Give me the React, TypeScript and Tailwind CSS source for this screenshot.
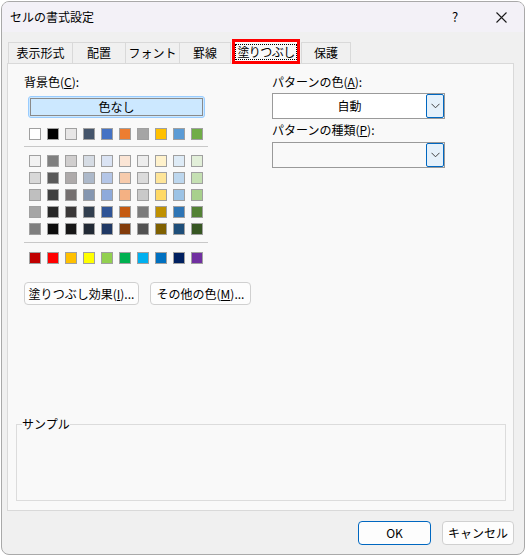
import React from 'react';

const font = { fontFamily: '"Noto Sans CJK JP", "Noto Sans", sans-serif' };

const themeRow = ['#ffffff', '#000000', '#e7e6e6', '#44546a', '#4472c4', '#ed7d31', '#a5a5a5', '#ffc000', '#5b9bd5', '#70ad47'];

const tintRows = [
  ['#f2f2f2', '#7f7f7f', '#d0cece', '#d6dce4', '#dae3f3', '#fbe5d5', '#ededed', '#fff2cc', '#deebf6', '#e2efd9'],
  ['#d8d8d8', '#595959', '#aeaaaa', '#adb9ca', '#b4c6e7', '#f7cbac', '#dbdbdb', '#fee599', '#bdd7ee', '#c5e0b3'],
  ['#bfbfbf', '#3f3f3f', '#757070', '#8496b0', '#8eaadb', '#f4b183', '#c9c9c9', '#ffd965', '#9cc3e5', '#a8d08d'],
  ['#a5a5a5', '#262626', '#3a3838', '#323f4f', '#2f5496', '#c55a11', '#7b7b7b', '#bf9000', '#2e75b5', '#538135'],
  ['#7f7f7f', '#0c0c0c', '#171616', '#222a35', '#1f3864', '#833c0b', '#525252', '#7f6000', '#1e4e79', '#375623'],
];

const standardRow = ['#c00000', '#ff0000', '#ffc000', '#ffff00', '#92d050', '#00b050', '#00b0f0', '#0070c0', '#002060', '#7030a0'];

function SwatchRow({ colors }: { colors: string[] }) {
  return (
    <div className="flex gap-[6px] ml-[5px]">
      {colors.map((c, i) => (
        <div key={i} className="size-[12px] border border-[#a0a0a0]" style={{ backgroundColor: c }} />
      ))}
    </div>
  );
}

function Chevron() {
  return (
    <svg width="9" height="6" viewBox="0 0 9 6" fill="none">
      <path d="M0.5 0.8 L4.5 4.8 L8.5 0.8" stroke="#404040" strokeWidth="1" />
    </svg>
  );
}

function Select({ value, white }: { value?: string; white?: boolean }) {
  return (
    <div className={`flex h-[26px] w-[173px] border border-[#9a9a9a] ${white ? 'bg-white' : 'bg-[#f9f9f9]'}`}>
      <div className="flex-1 flex items-center justify-center">{value}</div>
      <div className="w-[18px] h-full border border-[#0067c0] rounded-[2px] bg-[#e5f1fb] flex items-center justify-center">
        <Chevron />
      </div>
    </div>
  );
}

const tabs = [
  { label: '表示形式', w: 'w-[65px]' },
  { label: '配置', w: 'w-[54px]' },
  { label: 'フォント', w: 'w-[55px]' },
  { label: '罫線', w: 'w-[52px]' },
];

export default function App() {
  return (
    <div className="w-[527px] h-[556px] bg-white pl-[1px] pt-[1px] text-[12px] leading-[16px] text-black" style={font}>
      <div className="w-[524px] h-[554px] border border-[#a9a9a9] rounded-lg overflow-hidden flex flex-col bg-[#f0f0f0]">
        {/* Title bar */}
        <div className="h-[30px] bg-[#f3f1f7] flex items-center pl-[8px]">
          <span className="text-[12px]">セルの書式設定</span>
          <div className="ml-auto flex h-full">
            <div className="w-[46px] flex items-center justify-center text-[13px]">?</div>
            <div className="w-[46px] flex items-center justify-center">
              <svg width="11" height="11" viewBox="0 0 11 11">
                <path d="M0.5 0.5 L10.5 10.5 M10.5 0.5 L0.5 10.5" stroke="#1a1a1a" strokeWidth="1.1" />
              </svg>
            </div>
          </div>
        </div>

        {/* Tabs */}
        <div className="flex items-end h-[24px] mt-[7px] ml-[6px] relative z-10">
          {tabs.map((t, i) => (
            <div
              key={t.label}
              className={`${t.w} h-[21px] border-t border-l border-r border-[#d9d9d9] bg-[#f0f0f0] flex items-center justify-center ${i > 0 ? '-ml-px' : ''}`}
            >
              {t.label}
            </div>
          ))}
          <div className="w-[68px] h-[25px] -mb-px ml-px border-[3px] border-[#ff0000] bg-[#f9f9f9] flex items-center justify-center">
            <span className="border border-dotted border-black px-px leading-[14px] whitespace-nowrap tracking-[-0.6px]">塗りつぶし</span>
          </div>
          <div className="w-[50px] h-[21px] ml-px border-t border-l border-r border-[#d9d9d9] bg-[#f0f0f0] flex items-center justify-center">
            保護
          </div>
        </div>

        {/* Panel */}
        <div className="ml-[5px] w-[507px] h-[448px] border border-[#d9d9d9] bg-[#f9f9f9] flex flex-col pl-[16px] pt-[10px]">
          <div className="flex">
            {/* Left column */}
            <div className="w-[248px] flex flex-col">
              <div>
                背景色(<span className="underline">C</span>):
              </div>
              <div className="mt-[6px] ml-[4px] w-[177px] h-[22px] border border-[#99ccff] rounded-[3px] bg-[#cce8ff] p-px">
                <div className="h-full border border-[#8a8a8a] flex items-center justify-center">色なし</div>
              </div>
              <div className="mt-[10px]">
                <SwatchRow colors={themeRow} />
              </div>
              <div className="mt-[6px] w-[184px] h-px bg-[#c8c8c8]" />
              <div className="mt-[8px] flex flex-col gap-[5px]">
                {tintRows.map((r, i) => (
                  <SwatchRow key={i} colors={r} />
                ))}
              </div>
              <div className="mt-[7px] w-[184px] h-px bg-[#c8c8c8]" />
              <div className="mt-[9px]">
                <SwatchRow colors={standardRow} />
              </div>
              <div className="mt-[18px] flex gap-[11px]">
                <div className="w-[115px] h-[23px] border border-[#d0d0d0] rounded-[4px] bg-[#fdfdfd] flex items-center justify-center">
                  塗りつぶし効果(<span className="underline">I</span>)...
                </div>
                <div className="w-[101px] h-[23px] border border-[#d0d0d0] rounded-[4px] bg-[#fdfdfd] flex items-center justify-center">
                  その他の色(<span className="underline">M</span>)...
                </div>
              </div>
            </div>

            {/* Right column */}
            <div className="flex flex-col">
              <div>
                パターンの色(<span className="underline">A</span>):
              </div>
              <div className="mt-[3px]">
                <Select value="自動" white />
              </div>
              <div className="mt-[3px]">
                パターンの種類(<span className="underline">P</span>):
              </div>
              <div className="mt-[4px]">
                <Select />
              </div>
            </div>
          </div>

          {/* Sample */}
          <fieldset className="mt-auto mb-[9px] -ml-[8px] w-[490px] h-[84px] border border-[#dcdcdc] px-0">
            <legend className="ml-[5px] px-0 leading-[14px]">サンプル</legend>
          </fieldset>
        </div>

        {/* Footer */}
        <div className="flex justify-end gap-[11px] mt-[10px] mr-[10px]">
          <div className="w-[73px] h-[24px] border border-[#0067c0] rounded-[4px] bg-[#fdfdfd] flex items-center justify-center">
            OK
          </div>
          <div className="w-[72px] h-[24px] border border-[#d0d0d0] rounded-[4px] bg-[#fdfdfd] flex items-center justify-center">
            キャンセル
          </div>
        </div>
      </div>
    </div>
  );
}
